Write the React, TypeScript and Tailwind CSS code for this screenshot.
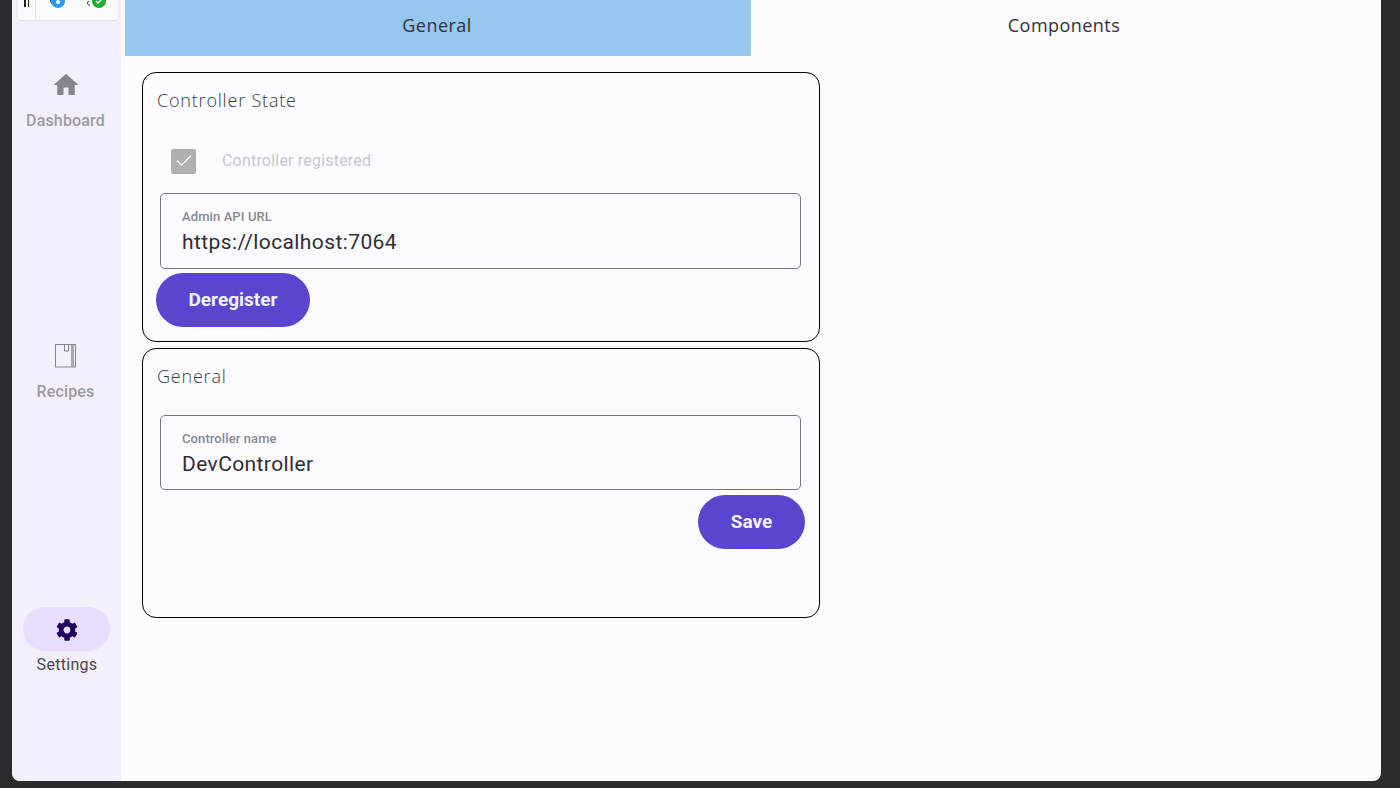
import { MdHome } from "react-icons/md";
import { FaCog } from "react-icons/fa";
import { Check } from "lucide-react";

const roboto = "font-['Roboto',sans-serif]";
const openSans = "font-['Open_Sans',sans-serif]";

function Field({ label, value, className }: { label: string; value: string; className: string }) {
  return (
    <div className={`${className} rounded-[5px] border border-[#79747e] pl-[21px] pt-[15px]`}>
      <div className={`${roboto} text-[13px] leading-[16px] font-medium tracking-[0.1px] text-[#8b8791]`}>{label}</div>
      <div className={`${roboto} mt-[3px] text-[21px] leading-[28px] tracking-[0.4px] text-[#2f2e33]`}>{value}</div>
    </div>
  );
}

function PillButton({ children, width }: { children: string; width: string }) {
  return (
    <div className={`${roboto} ${width} flex h-[54px] items-center justify-center rounded-full bg-[#5a45cf] text-[19px] font-bold text-[#f4f1ff]`}>
      {children}
    </div>
  );
}

function Card({ title, children }: { title: string; children: React.ReactNode }) {
  return (
    <section className="h-[270px] w-[678px] rounded-[14px] border border-black pl-[13px] pr-[14px] pt-[14px]">
      <h2 className={`${openSans} ml-[1px] text-[18px] leading-[26px] font-light tracking-[0.8px] text-[#3c3a42]`}>{title}</h2>
      {children}
    </section>
  );
}

function RailItem({ label, icon, active, className }: { label: string; icon: React.ReactNode; active?: boolean; className: string }) {
  return (
    <div className={`${className} flex flex-col items-center`}>
      <div className={`flex h-[44px] w-[87px] items-center justify-center rounded-full ${active ? "bg-[#e9ddff]" : ""}`}>{icon}</div>
      <div className={`${roboto} mt-[2px] text-[16px] leading-[24px] ${active ? "ml-[1px] font-normal tracking-[0.3px] text-[#49454f]" : "-ml-[2px] font-medium tracking-[0.15px] text-[#9d99a6]"}`}>{label}</div>
    </div>
  );
}

export default function App() {
  return (
    <div className="h-[788px] w-[1400px] overflow-hidden bg-[#2b2b2d] pl-[12px] pr-[19px] pb-[7px]">
      <div className="flex h-full overflow-hidden rounded-b-[8px] bg-[#fcfbff]">
        {/* nav rail */}
        <aside className="flex w-[109px] shrink-0 flex-col bg-[#f3f0fb]">
          <div className="ml-[6px] flex h-[20px] w-[100px] items-end overflow-hidden rounded-b-[4px] bg-[#fbfafd] shadow-[0_1px_2px_rgba(0,0,0,0.08)]">
            <div className="flex h-full w-[18px] items-start justify-center gap-[2px] border-r border-[#e8e6ec]">
              <span className="h-[7px] w-[1.5px] bg-[#222]" />
              <span className="h-[7px] w-[1.5px] bg-[#222]" />
            </div>
            <div className="flex h-full flex-1 items-start pl-[12px]">
              <svg width="22" height="10" viewBox="0 0 22 10">
                <path d="M2 0l2 4" stroke="#333" fill="none" />
                <circle cx="10" cy="1" r="7" fill="#2b9cf0" />
                <circle cx="10" cy="2" r="2" fill="#fff" />
              </svg>
              <svg className="ml-[15px]" width="22" height="10" viewBox="0 0 22 10">
                <path d="M4 1a2 2 0 1 0 1 4" stroke="#333" fill="none" />
                <circle cx="14" cy="1" r="7" fill="#1fae2c" />
                <path d="M11 1l2 2 4-4" stroke="#fff" strokeWidth="1.4" fill="none" />
              </svg>
            </div>
          </div>
          <RailItem
            className="mt-[43px]"
            label="Dashboard"
            icon={<MdHome className="-ml-[1px] text-[#87838f]" size={30} />}
          />
          <RailItem
            className="mt-[201px]"
            label="Recipes"
            icon={
              <svg className="-ml-[1px]" width="22" height="24" viewBox="0 0 22 24" fill="none">
                <rect x="0.5" y="0.5" width="20" height="22.5" stroke="#87838f" />
                <path d="M9.5 1v6h4V1" stroke="#87838f" />
                <rect x="16" y="1" width="3" height="22" fill="#a9a6b0" />
              </svg>
            }
          />
          <RailItem
            className="mt-[203px]"
            active
            label="Settings"
            icon={<FaCog className="mt-[1px] text-[#21005d]" size={22} />}
          />
        </aside>

        <main className="min-w-0 flex-1 pl-[4px]">
          <div className={`${openSans} flex h-[56px] text-[18px] tracking-[0.45px] text-[#33323a]`}>
            <div className="flex w-[626px] items-center justify-center bg-[#97c6ee] pr-[2px] pb-[6px]">General</div>
            <div className="flex w-[626px] items-center justify-center pb-[6px]">Components</div>
          </div>

          <div className="ml-[17px] mt-[16px] flex flex-col gap-[6px]">
            <Card title="Controller State">
              <div className="mt-[35px] flex h-[26px] items-center pl-[15px]">
                <div className="flex h-[25px] w-[25px] items-center justify-center rounded-[2px] bg-[#b0afb4]">
                  <Check className="text-[#fdfbff]" size={20} strokeWidth={1.5} />
                </div>
                <span className={`${roboto} ml-[26px] text-[16px] tracking-[0.2px] text-[#c9c7cd]`}>Controller registered</span>
              </div>
              <div className="ml-[4px] mr-[4px] mt-[19px]">
                <Field className="h-[76px]" label="Admin API URL" value="https://localhost:7064" />
              </div>
              <div className="mt-[4px]">
                <PillButton width="w-[154px]">Deregister</PillButton>
              </div>
            </Card>
            <Card title="General">
              <div className="ml-[4px] mr-[4px] mt-[26px]">
                <Field className="h-[75px]" label="Controller name" value="DevController" />
              </div>
              <div className="mt-[5px] flex justify-end">
                <PillButton width="w-[107px]">Save</PillButton>
              </div>
            </Card>
          </div>
        </main>
      </div>
    </div>
  );
}
